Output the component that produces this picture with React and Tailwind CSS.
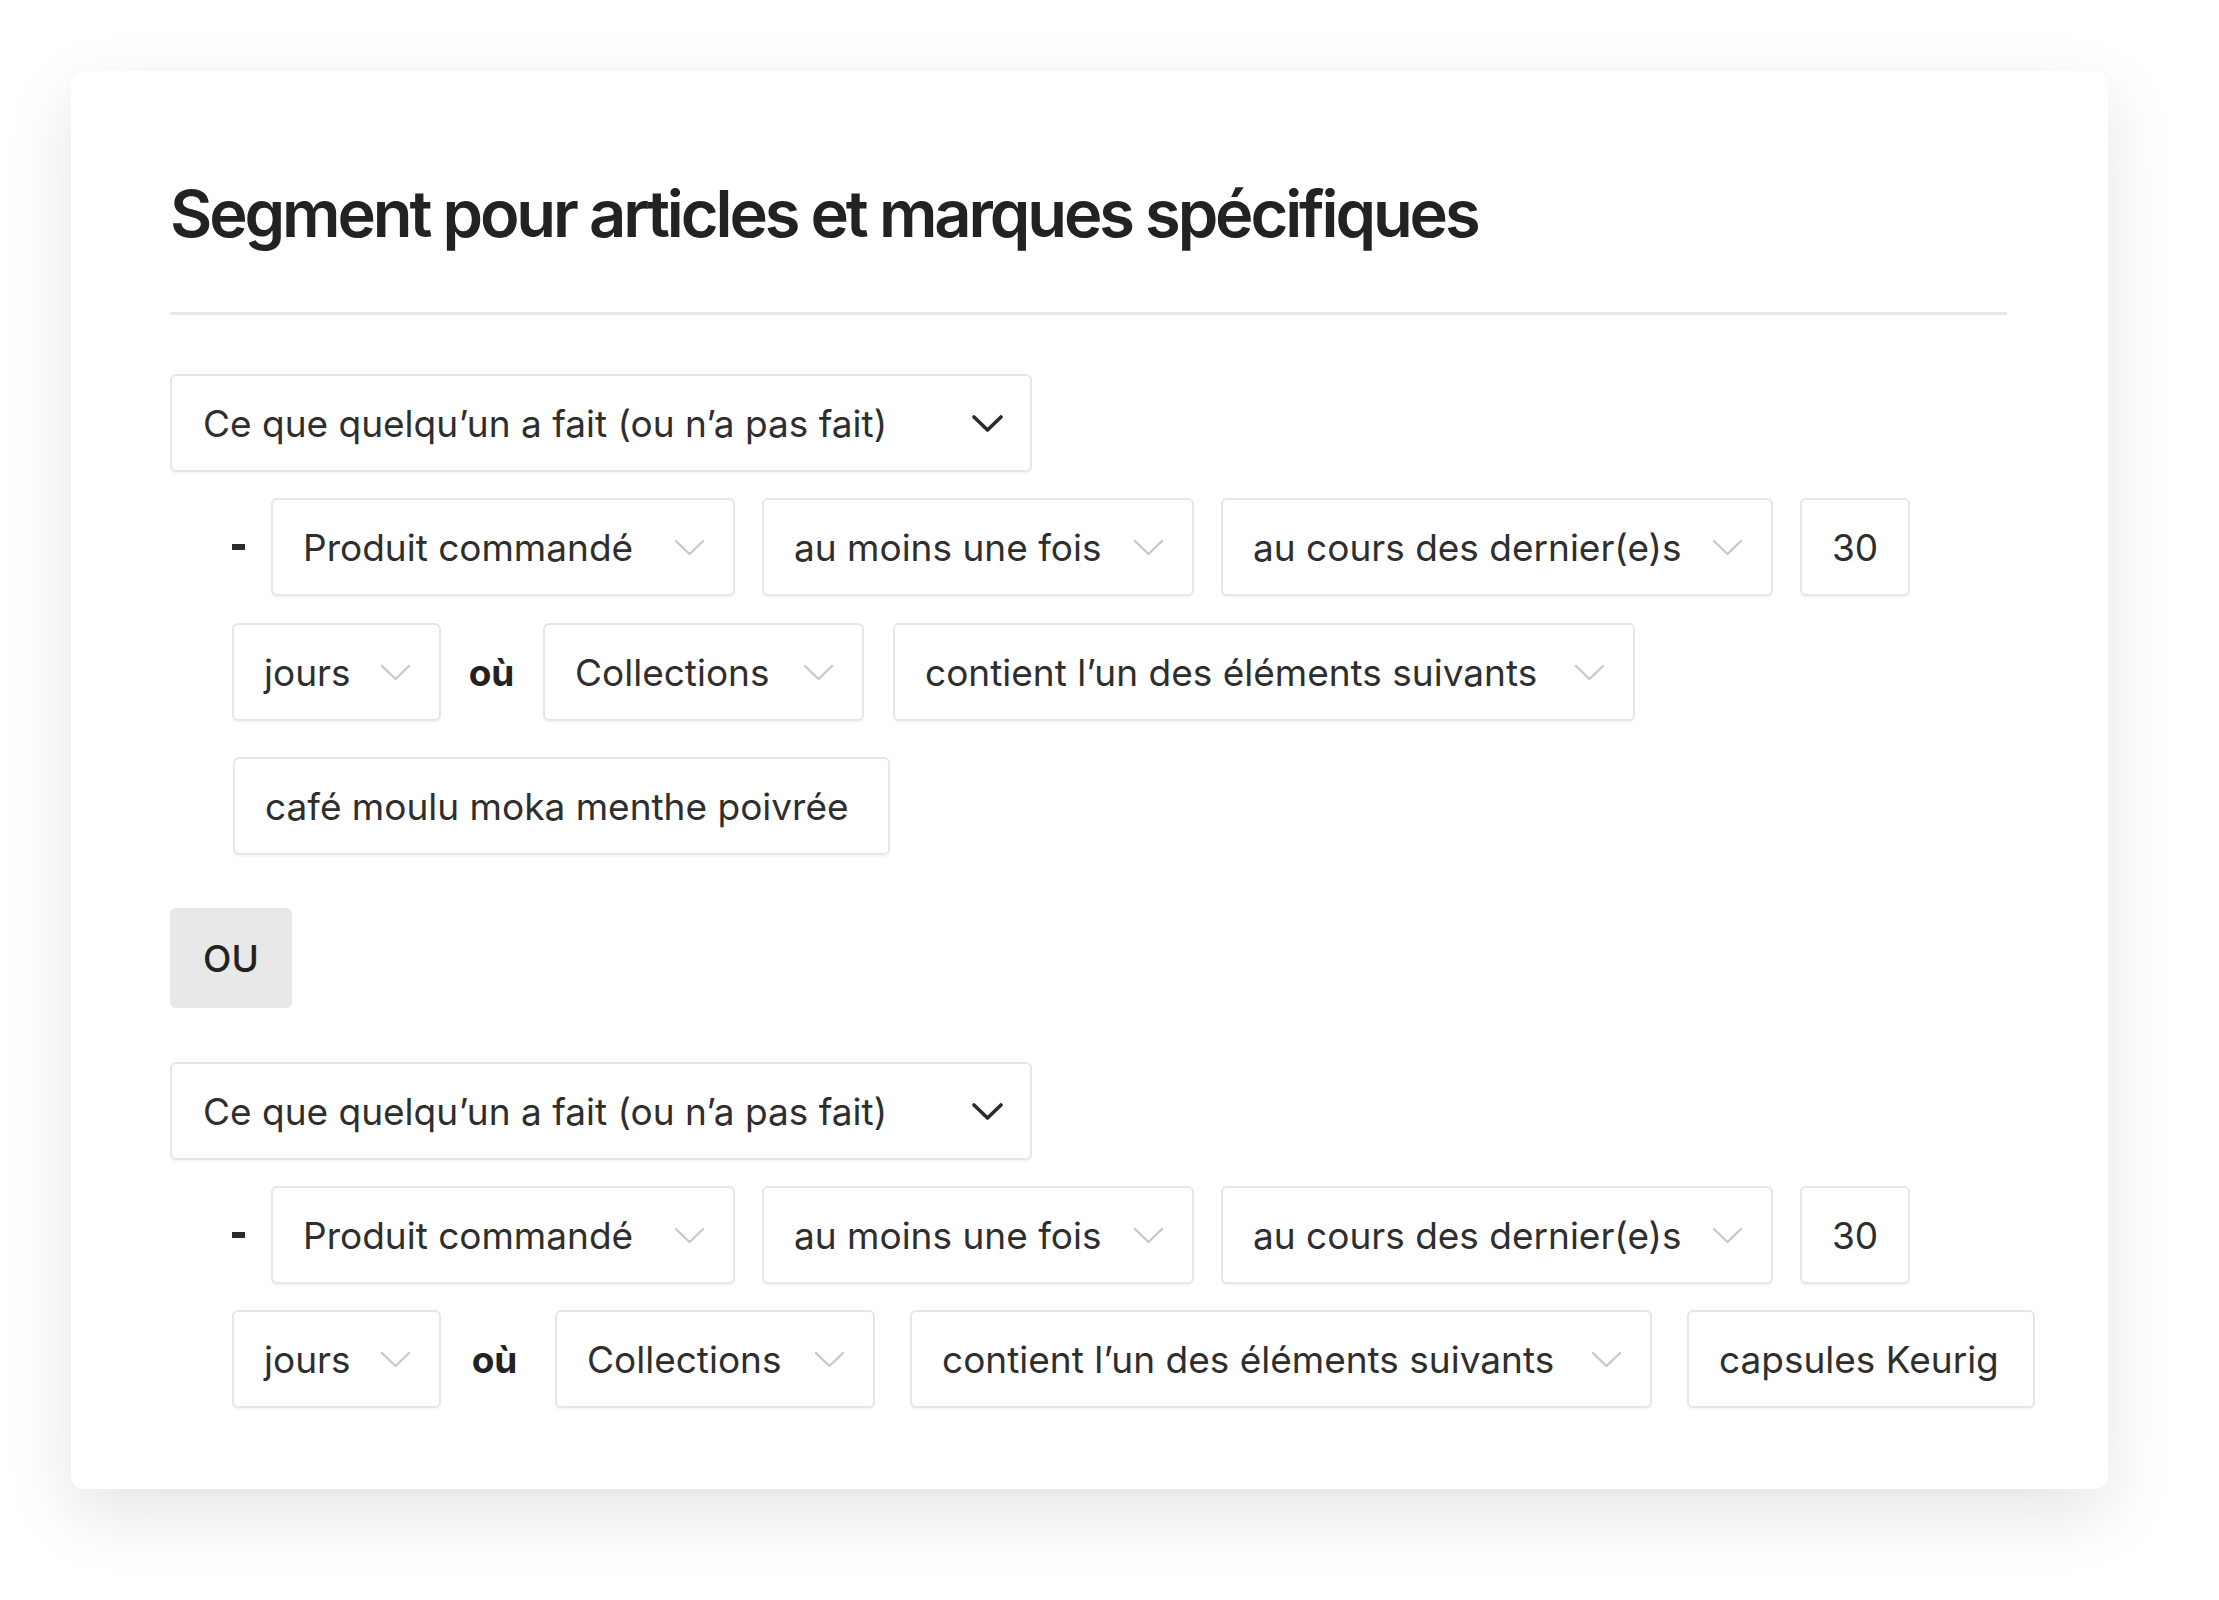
import React from "react";

const Chevron = ({ dark }) => (
  <svg
    width="31"
    height="17"
    viewBox="0 0 31 17"
    fill="none"
    className="shrink-0"
  >
    <polyline
      points="2,2 15.5,15 29,2"
      stroke={dark ? "#2b2b2b" : "#c9c9c9"}
      strokeWidth={dark ? 3.6 : 2.4}
      strokeLinecap="round"
      strokeLinejoin="round"
    />
  </svg>
);

const Select = ({ label, w }) => (
  <div
    className={`flex h-[98px] shrink-0 items-center justify-between rounded-[6px] border-2 border-[#e6e6e6] bg-white pl-[30px] pr-[28px] shadow-[0_2px_2px_rgba(0,0,0,0.04)] ${w}`}
  >
    <span className="whitespace-nowrap">{label}</span>
    <Chevron />
  </div>
);

const Value = ({ label, w }) => (
  <div
    className={`flex h-[98px] shrink-0 items-center rounded-[6px] border-2 border-[#e6e6e6] bg-white pl-[30px] shadow-[0_2px_2px_rgba(0,0,0,0.04)] ${w}`}
  >
    <span className="whitespace-nowrap">{label}</span>
  </div>
);

const MainSelect = () => (
  <div className="flex h-[98px] w-[862px] items-center justify-between rounded-[6px] border-2 border-[#e6e6e6] bg-white pl-[31px] pr-[27px] shadow-[0_2px_2px_rgba(0,0,0,0.04)]">
    <span className="whitespace-nowrap">Ce que quelqu’un a fait (ou n’a pas fait)</span>
    <Chevron dark />
  </div>
);

const FirstRow = () => (
  <div className="ml-[62px] mt-[26px] flex items-center">
    <div className="mr-[26px] h-[6px] w-[13px] shrink-0 bg-[#2b2b2b]" />
    <div className="flex gap-[27px]">
      <Select label="Produit commandé" w="w-[464px]" />
      <Select label="au moins une fois" w="w-[432px]" />
      <Select label="au cours des dernier(e)s" w="w-[552px]" />
      <Value label="30" w="w-[110px]" />
    </div>
  </div>
);

export default function App() {
  return (
    <div
      className="h-[1600px] w-[2219px] bg-white pl-[71px] pt-[71px] text-[37px] leading-none tracking-normal text-[#2e2e2e]"
      style={{ fontFamily: "Inter, 'Noto Sans', sans-serif" }}
    >
      <div className="flex h-[1418px] w-[2037px] flex-col rounded-[13px] bg-white pl-[99px] pr-[101px] pt-[110px] shadow-[0_24px_70px_rgba(0,0,0,0.11)]">
        <h1 className="h-[66px] text-[65px] font-semibold leading-none tracking-[-0.048em] text-[#222]">
          Segment pour articles et marques spécifiques
        </h1>
        <div className="mt-[65px] h-[3px] w-full bg-[#e8e8e8]" />

        {/* premier groupe */}
        <div className="mt-[59px]">
          <MainSelect />
        </div>
        <FirstRow />
        <div className="ml-[62px] mt-[27px] flex items-center">
          <Select label="jours" w="w-[209px]" />
          <span className="ml-[26px] mr-[27px] w-[49px] shrink-0 text-center font-bold text-[#222]">
            où
          </span>
          <div className="flex gap-[29px]">
            <Select label="Collections" w="w-[321px]" />
            <Select label="contient l’un des éléments suivants" w="w-[742px]" />
          </div>
        </div>
        <div className="ml-[63px] mt-[36px]">
          <Value label="café moulu moka menthe poivrée" w="w-[657px]" />
        </div>

        <div className="mt-[53px] flex h-[100px] w-[122px] items-center justify-center rounded-[6px] bg-[#e8e8e8] font-medium text-[#222]">
          OU
        </div>

        {/* second groupe */}
        <div className="mt-[54px]">
          <MainSelect />
        </div>
        <FirstRow />
        <div className="ml-[62px] mt-[26px] flex items-center">
          <Select label="jours" w="w-[209px]" />
          <span className="ml-[29px] mr-[36px] w-[49px] shrink-0 text-center font-bold text-[#222]">
            où
          </span>
          <div className="flex shrink-0 gap-[35px]">
            <Select label="Collections" w="w-[320px]" />
            <Select label="contient l’un des éléments suivants" w="w-[742px]" />
            <Value label="capsules Keurig" w="w-[348px]" />
          </div>
        </div>
      </div>
    </div>
  );
}
